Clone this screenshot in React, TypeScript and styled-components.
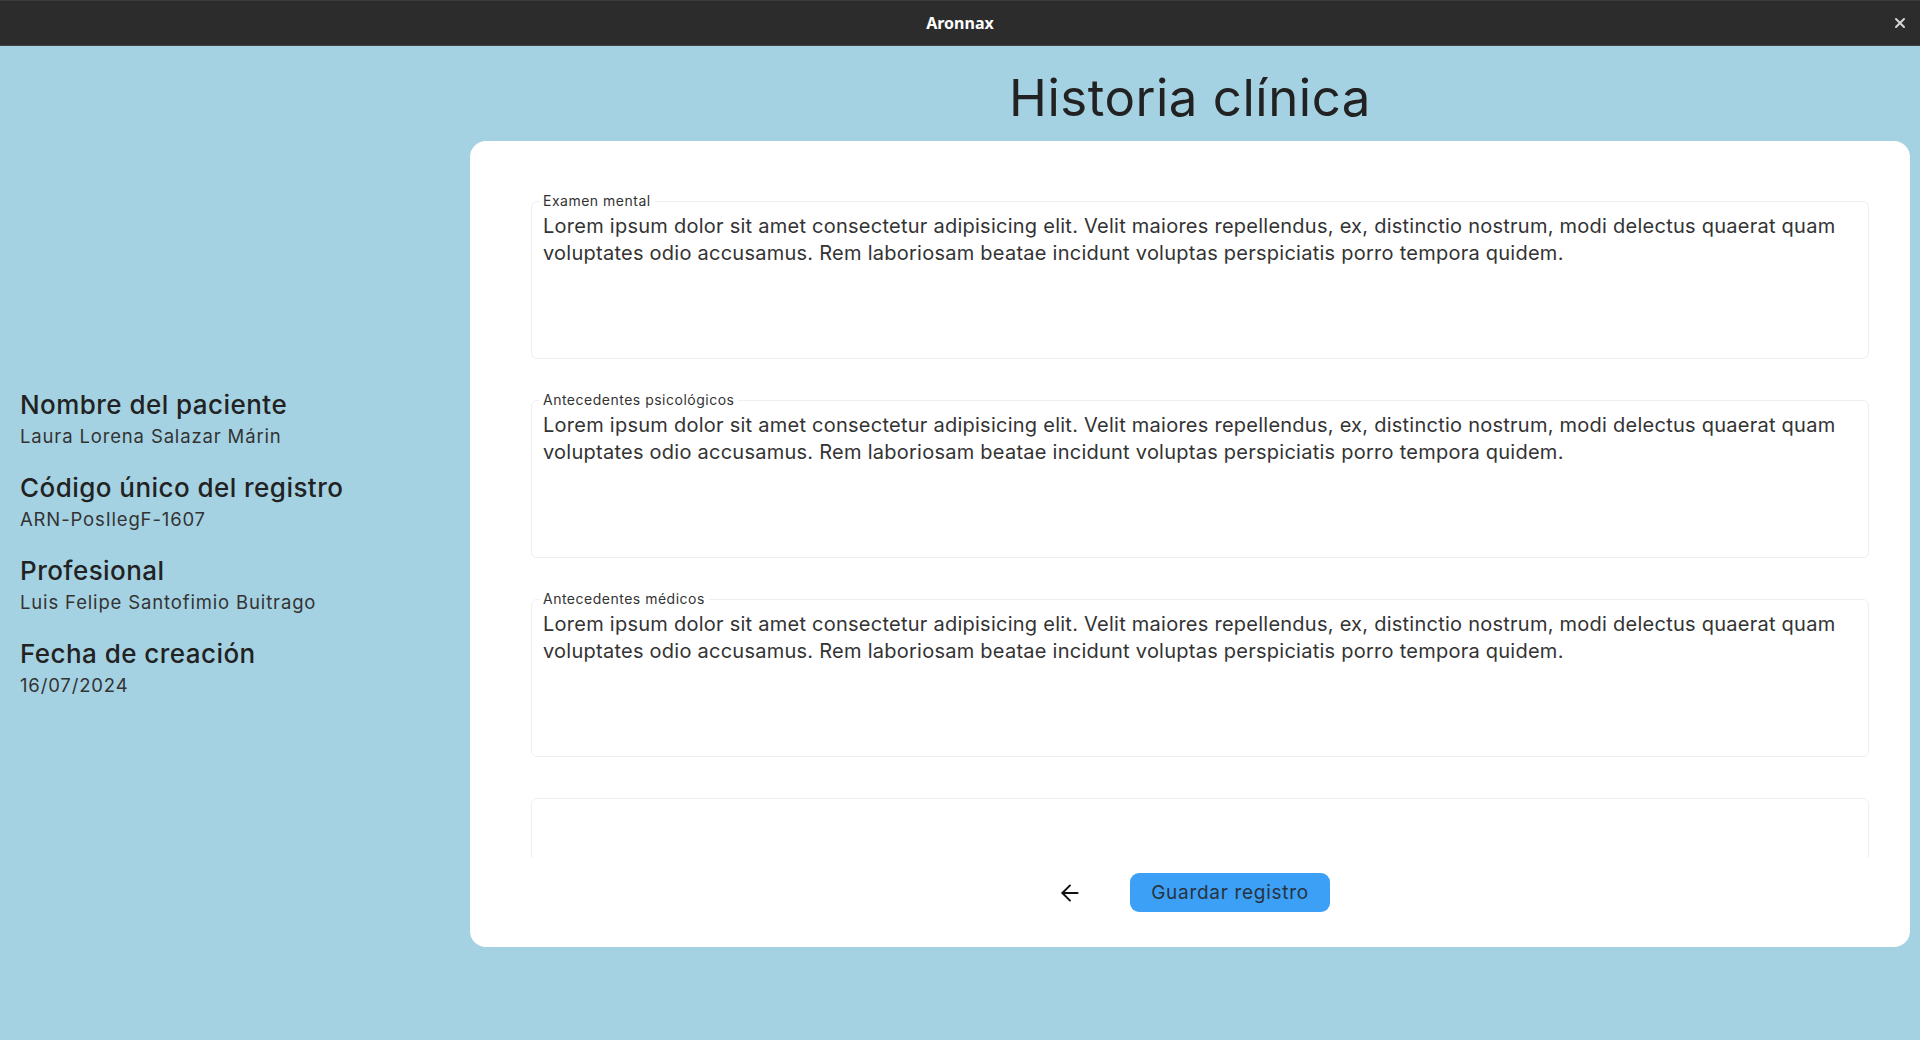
import React from 'react'
import styled, { createGlobalStyle } from 'styled-components'
import { ArrowLeft, X } from 'lucide-react'

const GlobalStyle = createGlobalStyle`
  html, body {
    margin: 0;
    padding: 0;
    height: 100%;
    overflow: hidden;
  }
  body {
    font-family: Inter, 'Noto Sans', sans-serif;
    color: #222222;
  }
  #root {
    height: 100%;
  }
`

const Window = styled.div`
  display: flex;
  flex-direction: column;
  height: 100vh;
  background-color: #a5d2e2;
`

const TitleBar = styled.header`
  position: relative;
  flex: 0 0 46px;
  display: flex;
  align-items: center;
  justify-content: center;
  background-color: #2c2c2c;
  box-shadow: inset 0 1px 0 #3b3b3b, inset 0 -1px 0 #424242;
`

const WindowTitle = styled.span`
  font-family: 'Noto Sans', sans-serif;
  font-size: 16px;
  font-weight: 700;
  color: #ffffff;
`

const CloseButton = styled.button`
  position: absolute;
  right: 12px;
  top: 50%;
  transform: translateY(-50%);
  display: grid;
  place-items: center;
  width: 16px;
  height: 16px;
  padding: 0;
  border: none;
  background: transparent;
  color: #d4d4d4;
`

const Page = styled.div`
  flex: 1;
  min-height: 0;
  display: flex;
`

const Sidebar = styled.aside`
  flex: 0 0 470px;
  display: flex;
  align-items: center;
  padding: 2px 0 0 20px;
  box-sizing: border-box;
`

const InfoList = styled.dl`
  display: flex;
  flex-direction: column;
  gap: 23px;
  margin: 0;
`

const InfoItem = styled.div`
  display: flex;
  flex-direction: column;
`

const InfoLabel = styled.dt`
  font-size: 26px;
  line-height: 30px;
  font-weight: 500;
  letter-spacing: 0.45px;
  color: #222222;
`

const InfoValue = styled.dd`
  margin: 2px 0 0;
  font-size: 18.5px;
  line-height: 28px;
  font-weight: 400;
  letter-spacing: 0.85px;
  color: #333333;
`

const Main = styled.main`
  flex: 1;
  min-width: 0;
  display: flex;
  flex-direction: column;
  padding: 22px 10px 93px 0;
`

const PageTitle = styled.h1`
  margin: 0 0 13px;
  font-size: 51px;
  line-height: 60px;
  font-weight: 400;
  letter-spacing: 0.5px;
  text-align: center;
  color: #222222;
`

const Card = styled.section`
  flex: 1;
  min-height: 0;
  display: flex;
  flex-direction: column;
  padding-bottom: 35px;
  background-color: #ffffff;
  border-radius: 16px;
`

const FieldList = styled.div`
  flex: 1;
  min-height: 0;
  display: flex;
  flex-direction: column;
  gap: 32px;
  padding: 51px 41px 0 61px;
  overflow-y: auto;
  scrollbar-width: none;

  &::-webkit-scrollbar {
    display: none;
  }
`

const Field = styled.fieldset<{ $bare?: boolean }>`
  flex-shrink: 0;
  margin: ${({ $bare }) => ($bare ? '9px 0 0' : '0')};
  padding: 0 7px;
  border: 1px solid #efefef;
  border-radius: 6px;
  min-width: 0;
`

const FieldLegend = styled.legend`
  padding: 0 4px;
  font-size: 14px;
  line-height: 18px;
  letter-spacing: 0.5px;
  color: #333333;
`

const FieldText = styled.textarea`
  display: block;
  width: 100%;
  height: 148px;
  box-sizing: border-box;
  margin: 0;
  padding: 3px 4px 0;
  border: none;
  outline: none;
  resize: none;
  overflow: hidden;
  background: transparent;
  font-family: inherit;
  font-size: 20px;
  line-height: 27px;
  letter-spacing: 0.25px;
  color: #333333;
`

const Footer = styled.div`
  flex: 0 0 39px;
  display: flex;
  align-items: center;
  justify-content: center;
  gap: 40px;
  margin-top: 15px;
`

const BackButton = styled.button`
  display: grid;
  place-items: center;
  width: 40px;
  height: 39px;
  padding: 0;
  border: none;
  background: transparent;
  color: #111111;
  cursor: pointer;
`

const SaveButton = styled.button`
  width: 200px;
  height: 39px;
  padding: 0;
  border: none;
  border-radius: 9px;
  background-color: #3ba0f6;
  font-family: inherit;
  font-size: 19px;
  letter-spacing: 0.7px;
  color: #29333f;
  cursor: pointer;
`

const lorem =
  'Lorem ipsum dolor sit amet consectetur adipisicing elit. Velit maiores repellendus, ex, distinctio nostrum, modi delectus quaerat quam voluptates odio accusamus. Rem laboriosam beatae incidunt voluptas perspiciatis porro tempora quidem.'

const patientInfo = [
  { label: 'Nombre del paciente', value: 'Laura Lorena Salazar Márin' },
  { label: 'Código único del registro', value: 'ARN-PosIlegF-1607' },
  { label: 'Profesional', value: 'Luis Felipe Santofimio Buitrago' },
  { label: 'Fecha de creación', value: '16/07/2024' }
]

const fields = [
  { id: 'mental', label: 'Examen mental', text: lorem },
  { id: 'psico', label: 'Antecedentes psicológicos', text: lorem },
  { id: 'medicos', label: 'Antecedentes médicos', text: lorem },
  { id: 'otros', label: '', text: '' }
]

const App = () => (
  <>
    <GlobalStyle />
    <Window>
      <TitleBar>
        <WindowTitle>Aronnax</WindowTitle>
        <CloseButton aria-label="Cerrar">
          <X size={16} strokeWidth={3} />
        </CloseButton>
      </TitleBar>
      <Page>
        <Sidebar>
          <InfoList>
            {patientInfo.map(item => (
              <InfoItem key={item.label}>
                <InfoLabel>{item.label}</InfoLabel>
                <InfoValue>{item.value}</InfoValue>
              </InfoItem>
            ))}
          </InfoList>
        </Sidebar>
        <Main>
          <PageTitle>Historia clínica</PageTitle>
          <Card>
            <FieldList>
              {fields.map(field => (
                <Field key={field.id} $bare={!field.label}>
                  {field.label && <FieldLegend>{field.label}</FieldLegend>}
                  <FieldText defaultValue={field.text} />
                </Field>
              ))}
            </FieldList>
            <Footer>
              <BackButton aria-label="Volver">
                <ArrowLeft size={26} strokeWidth={1.8} />
              </BackButton>
              <SaveButton>Guardar registro</SaveButton>
            </Footer>
          </Card>
        </Main>
      </Page>
    </Window>
  </>
)

export default App
